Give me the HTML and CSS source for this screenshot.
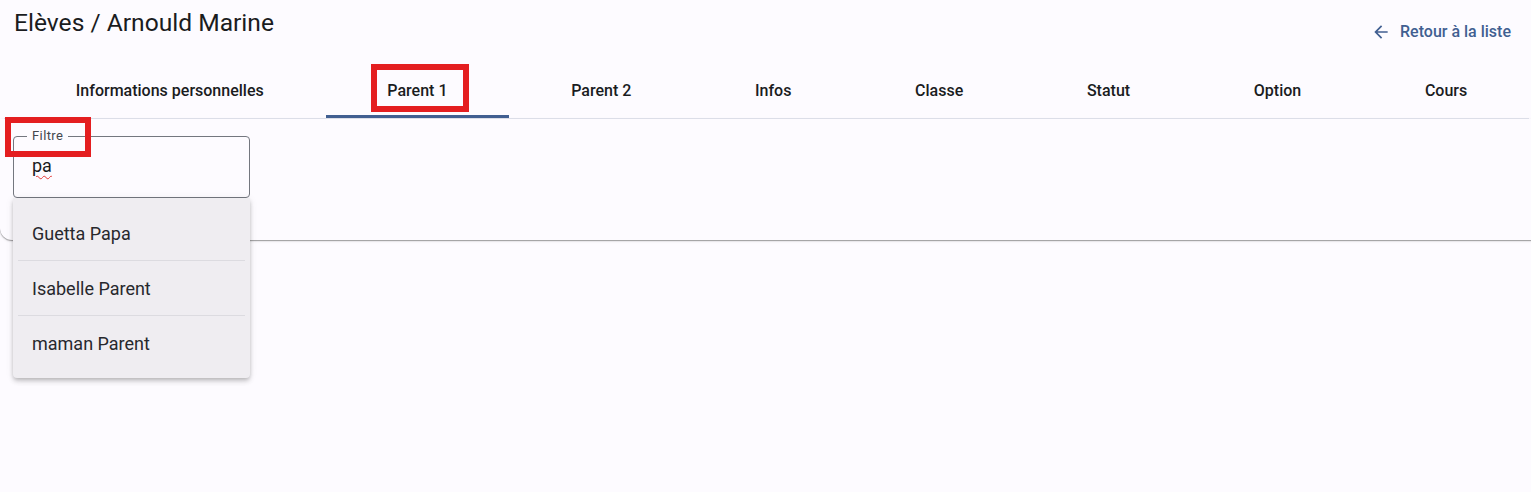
FILE: index.html
```html
<!DOCTYPE html>
<html lang="fr">
<head>
<meta charset="utf-8">
<title>Elèves / Arnould Marine</title>
<link rel="stylesheet" href="styles.css">
</head>
<body>
<div class="page">
  <header class="top">
    <h1 class="title">Elèves / Arnould Marine</h1>
    <a class="back" href="#">
      <svg class="back-icon" viewBox="0 0 24 24" width="20" height="20" aria-hidden="true"><path d="M20 11H7.83l5.59-5.59L12 4l-8 8 8 8 1.41-1.41L7.83 13H20v-2z"/></svg>
      <span>Retour à la liste</span>
    </a>
  </header>

  <nav class="tabs">
    <div class="tab">Informations personnelles</div>
    <div class="tab active">Parent 1</div>
    <div class="tab">Parent 2</div>
    <div class="tab">Infos</div>
    <div class="tab">Classe</div>
    <div class="tab">Statut</div>
    <div class="tab">Option</div>
    <div class="tab">Cours</div>
  </nav>

  <section class="card">
    <div class="field-wrap">
      <fieldset class="field">
        <legend class="field-label">Filtre</legend>
        <div class="field-input"><span class="misspelled">pa</span></div>
      </fieldset>
      <ul class="menu">
        <li class="menu-item">Guetta Papa</li>
        <li class="menu-item">Isabelle Parent</li>
        <li class="menu-item">maman Parent</li>
      </ul>
    </div>
  </section>

  <div class="mark mark-tab"></div>
  <div class="mark mark-label"></div>
</div>
</body>
</html>
```

FILE: styles.css
```css
html, body {
  margin: 0;
  padding: 0;
}
body {
  background: #fdfbff;
  color: #1a1c1e;
  font-family: Roboto, "Liberation Sans", Arial, sans-serif;
  overflow: hidden;
}
.page {
  position: relative;
  min-height: 492px;
}
.top {
  display: flex;
  justify-content: space-between;
  align-items: flex-start;
  height: 62px;
  box-sizing: border-box;
  padding: 7px 20px 0 14px;
}
.title {
  margin: 0;
  font-size: 24.6px;
  line-height: 32px;
  font-weight: 400;
  color: #1a1c1e;
}
.back {
  display: flex;
  align-items: center;
  gap: 9px;
  margin-top: 15px;
  color: #415f91;
  text-decoration: none;
  font-size: 16px;
  font-weight: 500;
  line-height: 20px;
}
.back-icon {
  fill: #415f91;
  display: block;
}
.tabs {
  display: flex;
  margin: 0 2px 0 4px;
  padding: 0 0 0 10px;
  border-bottom: 1px solid #e0e2ec;
}
.tab {
  flex: 1 1 auto;
  height: 56px;
  display: flex;
  align-items: center;
  justify-content: center;
  box-sizing: border-box;
  font-size: 16px;
  font-weight: 500;
  color: #1a1c1e;
  white-space: nowrap;
}
.tab.active {
  box-shadow: inset 0 -3px 0 #415f91;
}
.card {
  margin-right: -24px;
  padding: 9px 0 42px 13px;
  border-radius: 0 0 12px 12px;
  background: #fdfbff;
  box-shadow: 0 1px 1px rgba(0, 0, 0, 0.32), 0 1px 3px rgba(0, 0, 0, 0.12);
}
.field-wrap {
  position: relative;
  width: 237px;
}
.field {
  margin: 0;
  padding: 0 0 19px 13px;
  border: 1px solid #74777f;
  border-radius: 4px;
  min-width: 0;
}
.field-label {
  padding: 0 5px;
  font-size: 13px;
  letter-spacing: 0.4px;
  line-height: 16px;
  color: #44474e;
}
.field-input {
  margin-top: 10px;
  padding-left: 5px;
  font-size: 18px;
  line-height: 24px;
  color: #1a1c1e;
}
.misspelled {
  text-decoration: underline wavy #e53935;
  text-decoration-thickness: 1px;
  text-underline-offset: 3px;
}
.menu {
  position: absolute;
  top: 100%;
  left: 0;
  z-index: 2;
  width: 237px;
  margin: 0;
  padding: 8px 0 8px;
  list-style: none;
  background: #efedf1;
  border-radius: 0 0 4px 4px;
  box-shadow: 0 2px 4px -1px rgba(0, 0, 0, 0.2), 0 4px 5px 0 rgba(0, 0, 0, 0.1), 0 1px 8px 0 rgba(0, 0, 0, 0.08);
}
.menu-item {
  position: relative;
  height: 54px;
  display: flex;
  align-items: center;
  padding-left: 19px;
  font-size: 18px;
  color: #27282d;
}
.menu-item + .menu-item {
  border-top: 1px solid #dcdbe0;
  margin: 0 5px;
  padding-left: 14px;
}
.mark {
  position: absolute;
  box-sizing: border-box;
  border: 6px solid #e41e20;
  pointer-events: none;
  z-index: 5;
}
.mark-tab {
  left: 371px;
  top: 64px;
  width: 98px;
  height: 48px;
}
.mark-label {
  left: 5px;
  top: 117px;
  width: 86px;
  height: 40px;
}
```
